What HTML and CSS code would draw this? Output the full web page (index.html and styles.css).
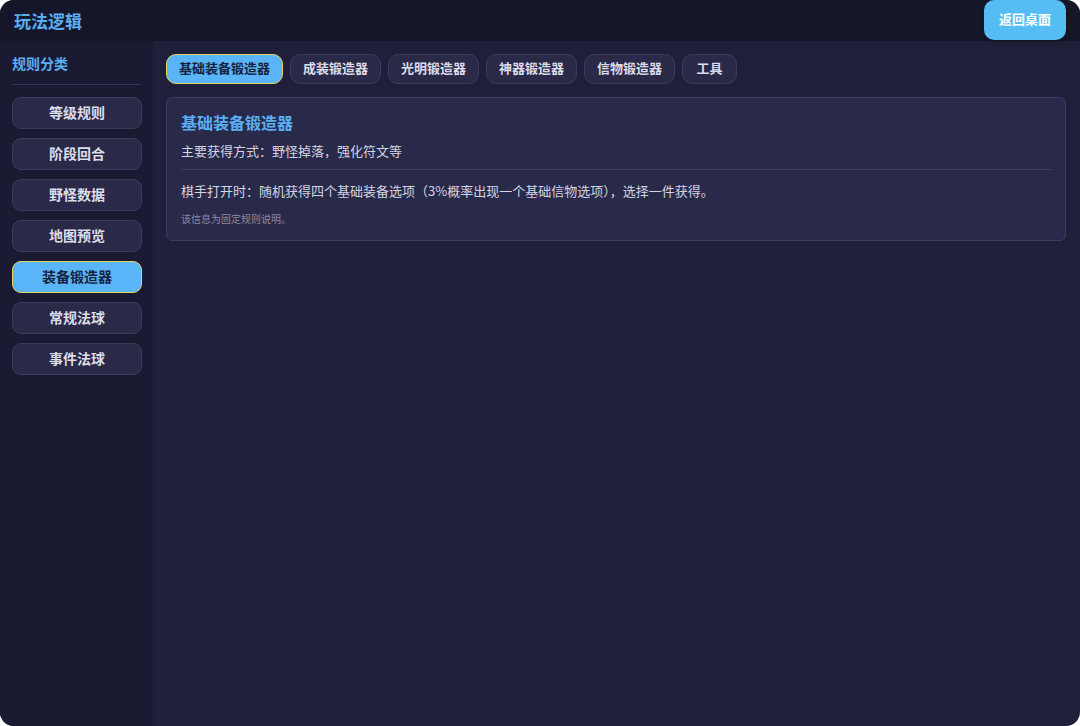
FILE: index.html
```html
<!DOCTYPE html>
<html lang="zh-CN">
<head>
    <meta charset="UTF-8">
    <meta name="viewport" content="width=device-width, initial-scale=1.0">
    <title>玩法逻辑</title>
    <link rel="stylesheet" href="styles.css">
</head>
<body>
    <div class="app">
        <!-- 顶部栏 -->
        <header class="topbar">
            <h1 class="app-title">玩法逻辑</h1>
            <button class="back-btn">返回桌面</button>
        </header>

        <div class="body">
            <!-- 左侧分类 -->
            <aside class="sidebar">
                <div class="sidebar-title">规则分类</div>
                <nav class="side-list">
                    <button class="side-btn">等级规则</button>
                    <button class="side-btn">阶段回合</button>
                    <button class="side-btn">野怪数据</button>
                    <button class="side-btn">地图预览</button>
                    <button class="side-btn active">装备锻造器</button>
                    <button class="side-btn">常规法球</button>
                    <button class="side-btn">事件法球</button>
                </nav>
            </aside>

            <!-- 主内容 -->
            <main class="content">
                <div class="tabs">
                    <button class="tab active">基础装备锻造器</button>
                    <button class="tab">成装锻造器</button>
                    <button class="tab">光明锻造器</button>
                    <button class="tab">神器锻造器</button>
                    <button class="tab">信物锻造器</button>
                    <button class="tab">工具</button>
                </div>

                <section class="card">
                    <h2 class="card-title">基础装备锻造器</h2>
                    <p class="card-sub">主要获得方式：野怪掉落，强化符文等</p>
                    <div class="card-line"></div>
                    <p class="card-text">棋手打开时：随机获得四个基础装备选项（3%概率出现一个基础信物选项），选择一件获得。</p>
                    <p class="card-note">该信息为固定规则说明。</p>
                </section>
            </main>
        </div>
    </div>
</body>
</html>
```

FILE: styles.css
```css
/* Estilos gerais */
html, body {
    margin: 0;
    padding: 0;
    background-color: #ffffff;
}

body {
    font-family: "Noto Sans CJK SC", "Noto Sans", sans-serif;
    width: 1080px;
    height: 726px;
    overflow: hidden;
}

.app {
    width: 1080px;
    height: 726px;
    border-radius: 14px;
    overflow: hidden;
    background-color: #1f1f3a;
    display: flex;
    flex-direction: column;
}

/* Topo */
.topbar {
    height: 41px;
    flex-shrink: 0;
    background-color: #161629;
    display: flex;
    align-items: center;
    justify-content: space-between;
    padding: 0 14px;
    box-sizing: border-box;
}

.app-title {
    margin: 0 0 1px;
    font-size: 17px;
    font-weight: bold;
    color: #5aaef5;
}

.back-btn {
    align-self: flex-start;
    height: 40px;
    width: 82px;
    border: none;
    border-radius: 10px;
    background-color: #55bdf3;
    color: #ffffff;
    font-family: inherit;
    font-size: 13px;
    font-weight: bold;
    padding: 0 0 3px;
    box-shadow: 0 2px 4px rgba(0, 0, 0, 0.3);
}

.body {
    flex: 1;
    display: flex;
}

/* Lateral */
.sidebar {
    width: 153px;
    flex-shrink: 0;
    background-color: #1a1a33;
    padding: 11px 12px;
    box-sizing: border-box;
}

.sidebar-title {
    font-size: 14px;
    font-weight: bold;
    color: #5aaef5;
    line-height: 22px;
    padding-bottom: 10px;
    border-bottom: 1px solid #34345a;
}

.side-list {
    display: flex;
    flex-direction: column;
    gap: 9px;
    margin-top: 12px;
}

.side-btn {
    height: 32px;
    width: 130px;
    border: 1px solid #3a3a5e;
    border-radius: 9px;
    background-color: #2a2a48;
    color: #dcdcea;
    font-family: inherit;
    font-size: 14px;
    font-weight: bold;
    padding: 0 0 3px;
}

.side-btn.active,
.tab.active {
    background-color: #5ab4f8;
    border: 1px solid #e6d45c;
    color: #17233e;
}

/* Conteudo */
.content {
    flex: 1;
    padding: 13px 14px 13px 13px;
    box-sizing: border-box;
}

.tabs {
    display: flex;
    gap: 7px;
}

.tab {
    height: 30px;
    min-width: 55px;
    padding: 0 12px 3px;
    border: 1px solid #3a3a5e;
    border-radius: 10px;
    background-color: #2a2a48;
    color: #dcdcea;
    font-family: inherit;
    font-size: 13px;
    font-weight: bold;
}

.card {
    margin-top: 13px;
    background-color: #292949;
    border: 1px solid #3c3c62;
    border-radius: 6px;
    padding: 12px 13px 13px 14px;
}

.card-title {
    margin: 0;
    font-size: 16px;
    font-weight: bold;
    color: #5aaef5;
    line-height: 24px;
}

.card-sub {
    margin: 6px 0 0;
    font-size: 13px;
    color: #d4d4e4;
    line-height: 22px;
}

.card-line {
    height: 1px;
    background-color: #3c3c62;
    margin: 7px 0 10px;
}

.card-text {
    margin: 0;
    font-size: 13px;
    color: #d4d4e4;
    line-height: 22px;
}

.card-note {
    margin: 9px 0 0;
    font-size: 10px;
    color: #8a8aa4;
    line-height: 16px;
}
```
